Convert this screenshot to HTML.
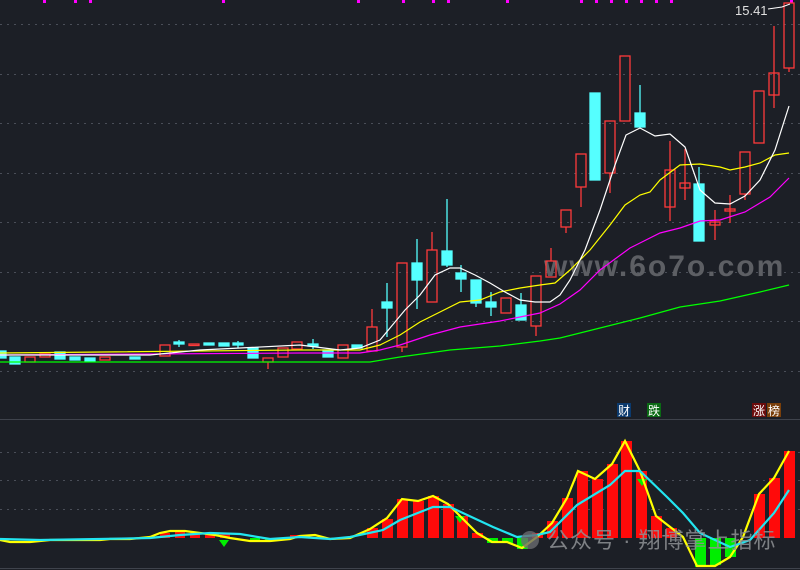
<!DOCTYPE html><html><head><meta charset="utf-8"><style>
html,body{margin:0;padding:0;background:#1c1f26;width:800px;height:570px;overflow:hidden}
svg{display:block}
</style></head><body>
<svg width="800" height="570" xmlns="http://www.w3.org/2000/svg" font-family="Liberation Sans, Noto Sans CJK SC, sans-serif">
<rect width="800" height="570" fill="#1c1f26"/>
<g stroke="#4a4e58" stroke-width="1" stroke-dasharray="2,5">
<line x1="0" y1="24.5" x2="800" y2="24.5"/><line x1="0" y1="74.5" x2="800" y2="74.5"/><line x1="0" y1="123.5" x2="800" y2="123.5"/><line x1="0" y1="173.5" x2="800" y2="173.5"/><line x1="0" y1="222.5" x2="800" y2="222.5"/><line x1="0" y1="272.5" x2="800" y2="272.5"/><line x1="0" y1="321.5" x2="800" y2="321.5"/><line x1="0" y1="371.5" x2="800" y2="371.5"/>
<line x1="0" y1="452.5" x2="800" y2="452.5"/><line x1="0" y1="480.5" x2="800" y2="480.5"/><line x1="0" y1="509.5" x2="800" y2="509.5"/>
</g>
<line x1="0" y1="419.5" x2="800" y2="419.5" stroke="#3f434c" stroke-width="1"/>
<line x1="0" y1="568.5" x2="800" y2="568.5" stroke="#3f434c" stroke-width="1"/>
<g fill="#ff00ff">
<rect x="43" y="0" width="3" height="3"/><rect x="74" y="0" width="3" height="3"/><rect x="89" y="0" width="3" height="3"/><rect x="222" y="0" width="3" height="3"/><rect x="357" y="0" width="3" height="3"/><rect x="402" y="0" width="3" height="3"/><rect x="432" y="0" width="3" height="3"/><rect x="447" y="0" width="3" height="3"/><rect x="506" y="0" width="3" height="3"/><rect x="580" y="0" width="3" height="3"/><rect x="595" y="0" width="3" height="3"/><rect x="610" y="0" width="3" height="3"/><rect x="625" y="0" width="3" height="3"/><rect x="640" y="0" width="3" height="3"/><rect x="655" y="0" width="3" height="3"/><rect x="670" y="0" width="3" height="3"/><rect x="790" y="0" width="3" height="3"/>
</g>
<text x="544" y="276" font-size="30" font-weight="bold" fill="#5d5f64" letter-spacing="2">www.6o7o.com</text>
<g stroke-width="1.3">
<g fill="#55ffff" stroke="#55ffff">
<rect x="0" y="351" width="6" height="7"/><rect x="10" y="357" width="10" height="7"/><rect x="55" y="352" width="10" height="7"/><rect x="70" y="357" width="10" height="3"/><rect x="85" y="358" width="10" height="3"/><rect x="130" y="357" width="10" height="2"/><rect x="174" y="342" width="10" height="2"/><rect x="204" y="343" width="10" height="2"/><rect x="219" y="343" width="10" height="3"/><rect x="233" y="343" width="10" height="2"/><rect x="248" y="348" width="10" height="10"/><rect x="308" y="344" width="10" height="2"/><rect x="323" y="350" width="10" height="7"/><rect x="352" y="345" width="10" height="3"/>
<rect x="382" y="302" width="10" height="6"/><rect x="412" y="263" width="10" height="17"/><rect x="442" y="251" width="10" height="14"/><rect x="456" y="273" width="10" height="6"/><rect x="471" y="280" width="10" height="23"/><rect x="486" y="302" width="10" height="5"/><rect x="516" y="305" width="10" height="15"/>
<rect x="590" y="93" width="10" height="87"/><rect x="635" y="113" width="10" height="14"/><rect x="694" y="184" width="10" height="57"/>
</g>
<g stroke="#55ffff">
<line x1="387" y1="283" x2="387" y2="337"/><line x1="417" y1="239" x2="417" y2="309"/><line x1="447" y1="199" x2="447" y2="267"/><line x1="461" y1="265" x2="461" y2="292"/><line x1="476" y1="280" x2="476" y2="307"/><line x1="491" y1="292" x2="491" y2="316"/><line x1="521" y1="293" x2="521" y2="320"/><line x1="640" y1="85" x2="640" y2="113"/><line x1="699" y1="167" x2="699" y2="184"/><line x1="179" y1="340" x2="179" y2="347"/><line x1="238" y1="341" x2="238" y2="348"/><line x1="313" y1="339" x2="313" y2="349"/>
</g>
<g fill="none" stroke="#ff3b3b">
<rect x="25" y="357" width="10" height="5"/><rect x="40" y="354" width="10" height="3"/><rect x="100" y="357" width="10" height="3"/><rect x="160" y="345" width="10" height="11"/><rect x="189" y="344" width="10" height="1.5"/><rect x="263" y="358" width="10" height="4"/><rect x="278" y="348" width="10" height="9"/><rect x="292" y="342" width="10" height="7"/><rect x="338" y="345" width="10" height="13"/>
<rect x="367" y="327" width="10" height="24"/><rect x="397" y="263" width="10" height="84"/><rect x="427" y="250" width="10" height="52"/><rect x="501" y="298" width="10" height="15"/><rect x="531" y="276" width="10" height="50"/><rect x="546" y="261" width="10" height="16"/>
<rect x="561" y="210" width="10" height="17"/><rect x="576" y="154" width="10" height="33"/><rect x="605" y="121" width="10" height="52"/><rect x="620" y="56" width="10" height="65"/><rect x="665" y="170" width="10" height="37"/><rect x="680" y="183" width="10" height="5"/><rect x="710" y="222" width="10" height="3"/><rect x="725" y="209" width="10" height="2"/><rect x="740" y="152" width="10" height="42"/><rect x="754" y="91" width="10" height="52"/><rect x="769" y="73" width="10" height="22"/><rect x="784" y="3" width="10" height="65"/>
<line x1="268" y1="362" x2="268" y2="369"/><line x1="372" y1="309" x2="372" y2="327"/><line x1="402" y1="347" x2="402" y2="352"/><line x1="432" y1="232" x2="432" y2="250"/><line x1="536" y1="326" x2="536" y2="336"/><line x1="551" y1="248" x2="551" y2="261"/><line x1="566" y1="227" x2="566" y2="233"/><line x1="581" y1="187" x2="581" y2="207"/><line x1="610" y1="173" x2="610" y2="193"/><line x1="670" y1="141" x2="670" y2="221"/><line x1="685" y1="149" x2="685" y2="200"/><line x1="715" y1="210" x2="715" y2="240"/><line x1="730" y1="195" x2="730" y2="223"/><line x1="745" y1="194" x2="745" y2="200"/><line x1="774" y1="26" x2="774" y2="108"/><line x1="789" y1="68" x2="789" y2="72"/>
</g>
</g>
<g fill="none" stroke-width="1.2">
<polyline stroke="#00ff00" points="0,362 370,362 400,357 450,350 500,346 540,341 560,338 600,328 640,318 680,307 720,301 760,292 789,285"/>
<polyline stroke="#ff00ff" points="0,355 300,353 360,353 380,350 400,345 430,335 460,327 500,321 520,317 540,313 560,304 580,290 600,270 630,248 660,233 680,228 700,221 720,220 745,212 770,197 789,178"/>
<polyline stroke="#ffff00" points="0,353 300,350 360,350 380,345 400,335 420,322 440,312 460,302 480,300 500,292 520,288 540,285 555,283 570,270 590,250 610,225 625,205 640,195 650,192 660,180 680,165 700,164 720,167 730,170 745,167 760,163 775,155 789,153"/>
<polyline stroke="#ffffff" points="0,355 150,355 200,350 300,345 340,350 360,348 380,340 395,322 405,310 420,295 435,275 450,268 460,268 475,275 490,283 505,292 520,300 535,302 550,302 560,295 570,280 585,250 600,210 615,165 626,135 640,128 655,136 670,134 685,147 693,170 700,190 715,203 730,204 745,196 760,180 775,150 789,106"/>
</g>
<text x="735" y="15" font-size="13" fill="#e0e0e0">15.41</text>
<polyline points="768,9 782,7 790,4" fill="none" stroke="#fff" stroke-width="1"/>
<rect x="617" y="403" width="14" height="14" fill="#0b3a6e"/><text x="618" y="415" font-size="12" fill="#fff">财</text>
<rect x="647" y="403" width="14" height="14" fill="#0a6a14"/><text x="648" y="415" font-size="12" fill="#fff">跌</text>
<rect x="752" y="403" width="14" height="14" fill="#6b0c0c"/><text x="753" y="415" font-size="12" fill="#fff">涨</text>
<rect x="767" y="403" width="14" height="14" fill="#7a3f0a"/><text x="768" y="415" font-size="12" fill="#fff">榜</text>
<g fill="#ff0a0a">
<rect x="367" y="528" width="11" height="10"/><rect x="382" y="519" width="11" height="19"/><rect x="397" y="499" width="11" height="39"/><rect x="413" y="501" width="11" height="37"/><rect x="428" y="496" width="11" height="42"/><rect x="443" y="504" width="11" height="34"/><rect x="457" y="516" width="11" height="22"/><rect x="472" y="533" width="11" height="5"/>
<rect x="532" y="533" width="11" height="5"/><rect x="547" y="521" width="11" height="17"/><rect x="562" y="498" width="11" height="40"/><rect x="577" y="471" width="11" height="67"/><rect x="592" y="479" width="11" height="59"/><rect x="607" y="464" width="11" height="74"/><rect x="621" y="441" width="11" height="97"/><rect x="636" y="471" width="11" height="67"/><rect x="651" y="516" width="11" height="22"/><rect x="666" y="528" width="11" height="10"/>
<rect x="754" y="494" width="11" height="44"/><rect x="769" y="478" width="11" height="60"/><rect x="784" y="451" width="11" height="87"/>
<rect x="160" y="533" width="10" height="5"/><rect x="175" y="532" width="10" height="6"/><rect x="190" y="532" width="10" height="6"/><rect x="205" y="533" width="10" height="5"/><rect x="220" y="534" width="10" height="4"/><rect x="290" y="535" width="10" height="3"/>
</g>
<g fill="#00ee00">
<rect x="487" y="538" width="11" height="5"/><rect x="502" y="538" width="11" height="5"/><rect x="517" y="538" width="11" height="11"/><rect x="695" y="538" width="11" height="29"/><rect x="710" y="538" width="11" height="27"/><rect x="725" y="538" width="11" height="19"/><rect x="250" y="538" width="10" height="4"/><rect x="265" y="538" width="10" height="3"/>
<polygon points="455,516 465,516 460,523"/><polygon points="637,479 647,479 642,486"/><polygon points="219,540 229,540 224,547"/>
</g>
<g fill="none" stroke-width="2.2">
<polyline stroke="#ffff00" points="0,540 10,542 30,542 50,540 100,540 110,539 130,539 150,537 160,533 170,531 185,531 200,533 215,535 230,538 250,541 270,541 290,539 300,536 315,535 330,539 350,538 370,529 387,518 402,499 418,501 433,496 448,504 462,518 477,533 492,542 507,542 522,548 537,537 552,523 567,498 578,471 595,479 612,464 625,441 640,471 656,516 683,537 697,566 715,566 730,557 743,537 759,494 774,478 789,451"/>
<polyline stroke="#22e5f0" points="0,539 40,540 100,539 150,538 180,535 210,533 240,534 270,539 300,537 330,539 350,537 383,530 400,520 433,507 450,507 493,527 517,537 537,535 550,532 577,505 610,485 625,471 640,471 667,497 683,513 700,533 730,547 750,540 774,513 789,490"/>
</g>
<circle cx="530" cy="540" r="9" fill="#6a6c70" opacity="0.8"/>
<text x="547" y="548" font-size="22" fill="#8f9195" opacity="0.85" letter-spacing="1">公众号 · 翔博掌上指标</text>
</svg>
</body></html>
